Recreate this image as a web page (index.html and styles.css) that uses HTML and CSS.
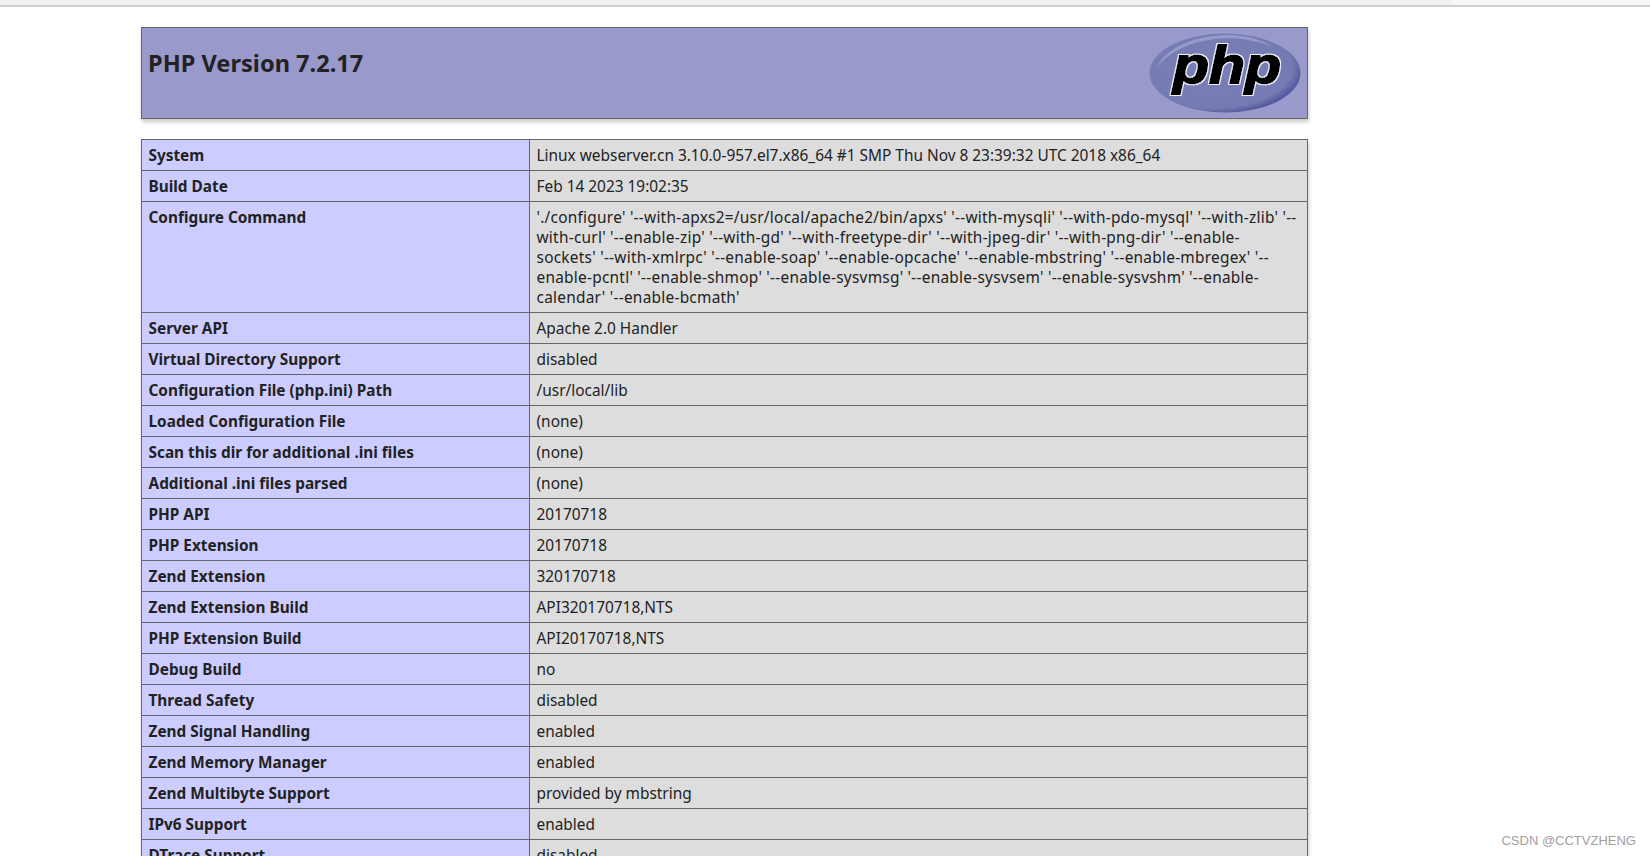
FILE: index.html
```html
<!DOCTYPE html>
<html lang="en">
<head>
<meta charset="utf-8">
<title>phpinfo()</title>
<link rel="stylesheet" href="styles.css">
</head>
<body>
<div class="chrome"><div class="tabstrip"></div></div>
<main class="page">
  <section class="banner">
    <h1 class="version">PHP Version 7.2.17</h1>
    <svg class="logo" viewBox="0 0 152 80" width="152" height="80" role="img" aria-label="PHP logo">
      <defs>
        <radialGradient id="ov" cx="0.42" cy="0.42" r="0.62">
          <stop offset="0" stop-color="#7a80b6"/>
          <stop offset="0.85" stop-color="#757ab3"/>
          <stop offset="1" stop-color="#4b5096"/>
        </radialGradient>
        <filter id="halo" x="-10%" y="-20%" width="120%" height="140%">
          <feMorphology in="SourceAlpha" operator="dilate" radius="1"/>
          <feGaussianBlur stdDeviation="0.3" result="d"/>
          <feFlood flood-color="#eef0f8"/>
          <feComposite in2="d" operator="in" result="h"/>
          <feMerge><feMergeNode in="h"/><feMergeNode in="SourceGraphic"/></feMerge>
        </filter>
      </defs>
      <ellipse cx="76" cy="40" rx="75.5" ry="39.5" fill="url(#ov)"/>
      <path d="M8 34C18 13 50 2 78 2c18 0 34 4 46 12C104 6 82 4 66 6 40 9 20 19 8 34z" fill="#a4a8d2" opacity=".7"/>
      <text class="logo-text" x="78" y="50" text-anchor="middle" textLength="108" lengthAdjust="spacingAndGlyphs" filter="url(#halo)">php</text>
    </svg>
  </section>
  <table class="info">
    <tr><td class="e">System</td><td class="v">Linux webserver.cn 3.10.0-957.el7.x86_64 #1 SMP Thu Nov 8 23:39:32 UTC 2018 x86_64</td></tr>
    <tr><td class="e">Build Date</td><td class="v">Feb 14 2023 19:02:35</td></tr>
    <tr><td class="e">Configure Command</td><td class="v cmd">'./configure' '--with-apxs2=/usr/local/apache2/bin/apxs' '--with-mysqli' '--with-pdo-mysql' '--with-zlib' '--<br>with-curl' '--enable-zip' '--with-gd' '--with-freetype-dir' '--with-jpeg-dir' '--with-png-dir' '--enable-<br>sockets' '--with-xmlrpc' '--enable-soap' '--enable-opcache' '--enable-mbstring' '--enable-mbregex' '--<br>enable-pcntl' '--enable-shmop' '--enable-sysvmsg' '--enable-sysvsem' '--enable-sysvshm' '--enable-<br>calendar' '--enable-bcmath'</td></tr>
    <tr><td class="e">Server API</td><td class="v">Apache 2.0 Handler</td></tr>
    <tr><td class="e">Virtual Directory Support</td><td class="v">disabled</td></tr>
    <tr><td class="e">Configuration File (php.ini) Path</td><td class="v">/usr/local/lib</td></tr>
    <tr><td class="e">Loaded Configuration File</td><td class="v">(none)</td></tr>
    <tr><td class="e">Scan this dir for additional .ini files</td><td class="v">(none)</td></tr>
    <tr><td class="e">Additional .ini files parsed</td><td class="v">(none)</td></tr>
    <tr><td class="e">PHP API</td><td class="v">20170718</td></tr>
    <tr><td class="e">PHP Extension</td><td class="v">20170718</td></tr>
    <tr><td class="e">Zend Extension</td><td class="v">320170718</td></tr>
    <tr><td class="e">Zend Extension Build</td><td class="v">API320170718,NTS</td></tr>
    <tr><td class="e">PHP Extension Build</td><td class="v">API20170718,NTS</td></tr>
    <tr><td class="e">Debug Build</td><td class="v">no</td></tr>
    <tr><td class="e">Thread Safety</td><td class="v">disabled</td></tr>
    <tr><td class="e">Zend Signal Handling</td><td class="v">enabled</td></tr>
    <tr><td class="e">Zend Memory Manager</td><td class="v">enabled</td></tr>
    <tr><td class="e">Zend Multibyte Support</td><td class="v">provided by mbstring</td></tr>
    <tr><td class="e">IPv6 Support</td><td class="v">enabled</td></tr>
    <tr><td class="e">DTrace Support</td><td class="v">disabled</td></tr>
  </table>
</main>
<div class="watermark">CSDN @CCTVZHENG</div>
</body>
</html>
```
FILE: styles.css
```css
html, body {
  margin: 0;
  height: 856px;
  overflow: hidden;
  background: #fff;
}
body {
  position: relative;
  font-family: "Noto Sans", "Open Sans", sans-serif;
  font-size: 15.42px;
  line-height: 20px;
  color: #222;
}
.chrome {
  height: 5px;
  background: #f7f7f7;
  border-bottom: 2px solid #d0d0d0;
}
.tabstrip {
  width: 1452px;
  height: 5px;
  background: #f2f2f2;
}
.page {
  width: 1167px;
  padding: 20px 0 0 141px;
}
.banner {
  box-sizing: border-box;
  height: 92px;
  display: flex;
  justify-content: space-between;
  align-items: flex-start;
  padding: 5px 6px 0 6px;
  background: #99c;
  border: 1px solid #666;
  box-shadow: 1px 3px 4px #ccc;
}
.version {
  margin: 15px 0 0;
  font-size: 23.6px;
  line-height: 30px;
  font-weight: 700;
}
.logo { display: block; }
.logo-text {
  font-family: "Liberation Sans", sans-serif;
  font-size: 52px;
  font-weight: 700;
  font-style: italic;
  fill: #000;
  stroke: #000;
  stroke-width: 1.8px;
}
.info {
  width: 1167px;
  margin-top: 20px;
  table-layout: fixed;
  border-collapse: collapse;
  box-shadow: 1px 3px 4px #ccc;
}
.info td {
  border: 1px solid #666;
  padding: 6px 6px 4px 6.5px;
  vertical-align: baseline;
}
.e {
  width: 374.5px;
  background: #ccf;
  font-weight: 700;
  font-size: 15.36px;
}
.v { background: #ddd; }
.cmd {
  letter-spacing: 0.25px;
  white-space: nowrap;
}
.watermark {
  position: absolute;
  right: 14px;
  bottom: 7px;
  font-family: "Liberation Sans", sans-serif;
  font-size: 13px;
  line-height: 16px;
  color: #a0a0a0;
}
```
